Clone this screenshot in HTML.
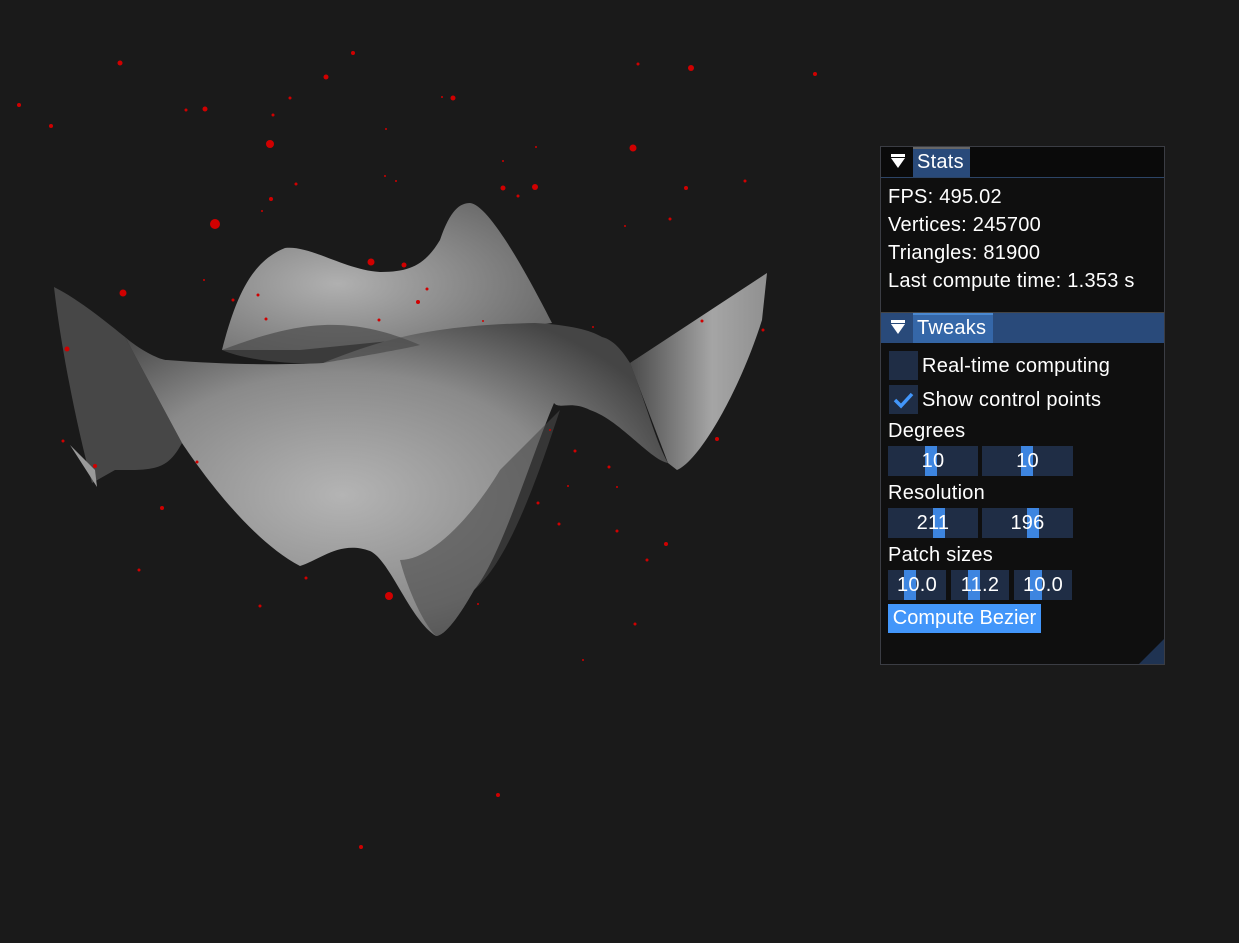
<!DOCTYPE html>
<html><head><meta charset="utf-8"><style>
html,body{margin:0;padding:0;width:1239px;height:943px;background:#1a1a1a;overflow:hidden;font-family:"Liberation Sans",sans-serif;}
svg{position:absolute;left:0;top:0}
.p{position:absolute;left:880px;top:146px;width:283px;height:517px;background:#0f0f0f;border:1px solid #3b3d44;box-sizing:content-box;color:#fff;font-size:20px;letter-spacing:0.25px}
.a{position:absolute}
.h{position:absolute;left:0;width:283px;height:30px}
.tri{position:absolute;left:10px;top:11px;width:0;height:0;border-left:7px solid transparent;border-right:7px solid transparent;border-top:10px solid #fff}
.tri:before{content:"";position:absolute;left:-7px;top:-14px;width:14px;height:3px;background:#fff}
.box{position:absolute;background:#1f2d45;height:30px;text-align:center;line-height:30px}
.g{position:absolute;top:0;width:12px;height:30px;background:#3d85e0}
.box span{position:relative}
</style></head><body>
<svg width="1239" height="943">
<defs>
<radialGradient id="gb" cx="0.35" cy="0.55" r="0.7"><stop offset="0" stop-color="#b0b0b0"/><stop offset="1" stop-color="#6a6a6a"/></radialGradient>
<radialGradient id="gf" cx="0.4" cy="0.55" r="0.65"><stop offset="0" stop-color="#b4b4b4"/><stop offset="0.6" stop-color="#8a8a8a"/><stop offset="1" stop-color="#454545"/></radialGradient>
<linearGradient id="gr" x1="0" y1="0" x2="1" y2="0"><stop offset="0" stop-color="#4a4a4a"/><stop offset="0.6" stop-color="#a5a5a5"/><stop offset="1" stop-color="#909090"/></linearGradient>
</defs>
<path d="M222,350 C235,300 250,262 285,248 C310,245 345,270 380,272 C410,272 425,265 440,240 C450,210 460,203 470,203 C490,205 530,280 552,323 L500,330 L300,350Z" fill="url(#gb)"/>
<path d="M630,363 L767,273 L762,320 C740,390 700,460 677,470 L668,463Z" fill="url(#gr)"/>
<path d="M54,287 C80,300 110,325 125,337 L182,443 C170,465 160,470 130,470 L115,470 L92,483 C75,420 60,340 54,287Z" fill="#474747"/>
<path d="M70,445 L95,470 L97,487Z" fill="#9a9a9a"/>
<path d="M125,337 C140,350 160,360 167,360 C230,365 280,365 323,363 C380,340 430,325 535,323 C570,325 590,330 602,337 C615,340 625,355 630,363 C645,400 655,440 668,463 C650,460 620,420 590,410 C570,400 560,410 554,403 C530,460 500,560 474,590 C460,615 445,636 436,636 C410,620 390,560 370,551 C340,540 320,560 300,566 C250,540 200,470 182,443Z" fill="url(#gf)"/>
<path d="M222,350 C300,320 350,315 420,345 C400,350 323,363 323,363 C280,365 240,358 222,350Z" fill="#4a4a4a" opacity="0.7"/>
<path d="M560,410 C540,470 510,560 474,590 C460,615 445,636 436,636 C420,620 405,580 400,560 C430,560 470,520 500,470Z" fill="#4a4a4a" opacity="0.6"/>
<g fill="#d00000">
<circle cx="120" cy="63" r="2.5"/><circle cx="19" cy="105" r="2"/><circle cx="51" cy="126" r="2"/><circle cx="186" cy="110" r="1.5"/><circle cx="205" cy="109" r="2.5"/><circle cx="270" cy="144" r="4"/><circle cx="290" cy="98" r="1.5"/><circle cx="326" cy="77" r="2.5"/><circle cx="353" cy="53" r="2"/><circle cx="453" cy="98" r="2.5"/><circle cx="442" cy="97" r="1"/><circle cx="386" cy="129" r="1"/><circle cx="273" cy="115" r="1.5"/><circle cx="296" cy="184" r="1.5"/><circle cx="385" cy="176" r="1"/><circle cx="396" cy="181" r="1"/><circle cx="503" cy="188" r="2.5"/><circle cx="535" cy="187" r="3"/><circle cx="518" cy="196" r="1.5"/><circle cx="633" cy="148" r="3.5"/><circle cx="638" cy="64" r="1.5"/><circle cx="691" cy="68" r="3"/><circle cx="815" cy="74" r="2"/><circle cx="536" cy="147" r="1"/><circle cx="686" cy="188" r="2"/><circle cx="745" cy="181" r="1.5"/><circle cx="670" cy="219" r="1.5"/><circle cx="625" cy="226" r="1"/><circle cx="503" cy="161" r="1"/><circle cx="262" cy="211" r="1"/><circle cx="271" cy="199" r="2"/><circle cx="215" cy="224" r="5"/><circle cx="371" cy="262" r="3.5"/><circle cx="404" cy="265" r="2.5"/><circle cx="123" cy="293" r="3.5"/><circle cx="204" cy="280" r="1"/><circle cx="258" cy="295" r="1.5"/><circle cx="233" cy="300" r="1.5"/><circle cx="67" cy="349" r="2.5"/><circle cx="427" cy="289" r="1.5"/><circle cx="418" cy="302" r="2"/><circle cx="379" cy="320" r="1.5"/><circle cx="266" cy="319" r="1.5"/><circle cx="702" cy="321" r="1.5"/><circle cx="593" cy="327" r="1"/><circle cx="763" cy="330" r="1.5"/><circle cx="717" cy="439" r="2"/><circle cx="63" cy="441" r="1.5"/><circle cx="95" cy="466" r="2"/><circle cx="197" cy="462" r="1.5"/><circle cx="575" cy="451" r="1.5"/><circle cx="609" cy="467" r="1.5"/><circle cx="617" cy="487" r="1"/><circle cx="568" cy="486" r="1"/><circle cx="538" cy="503" r="1.5"/><circle cx="162" cy="508" r="2"/><circle cx="559" cy="524" r="1.5"/><circle cx="617" cy="531" r="1.5"/><circle cx="666" cy="544" r="2"/><circle cx="647" cy="560" r="1.5"/><circle cx="139" cy="570" r="1.5"/><circle cx="306" cy="578" r="1.5"/><circle cx="389" cy="596" r="4"/><circle cx="478" cy="604" r="1"/><circle cx="260" cy="606" r="1.5"/><circle cx="635" cy="624" r="1.5"/><circle cx="583" cy="660" r="1"/><circle cx="498" cy="795" r="2"/><circle cx="361" cy="847" r="2"/><circle cx="550" cy="430" r="1"/><circle cx="483" cy="321" r="1"/>
</g>
</svg>
<div class="p">
<div class="h" style="top:0;background:#0a0a0a;border-bottom:1px solid #2c4466"><div class="tri"></div><div class="a" style="left:32px;top:0;width:57px;height:30px;background:#294a7a;border-top:2px solid #666;box-sizing:border-box;padding-left:4px;line-height:27px">Stats</div></div>
<div class="a" style="left:7px;top:36px;line-height:28px">FPS: 495.02<br>Vertices: 245700<br>Triangles: 81900<br>Last compute time: 1.353 s</div>
<div class="h" style="top:165px;background:#294a7a;border-top:1px solid #444"><div class="tri"></div><div class="a" style="left:32px;top:0;width:80px;height:30px;background:#3567a8;border-top:2px solid #4a88d0;box-sizing:border-box;padding-left:4px;line-height:27px">Tweaks</div></div>
<div class="a" style="left:8px;top:204px;width:29px;height:29px;background:#1f2d45"></div>
<div class="a" style="left:41px;top:206px;line-height:26px">Real-time computing</div>
<div class="a" style="left:8px;top:238px;width:29px;height:29px;background:#1f2d45"><svg width="29" height="29"><path d="M6,15 L12,21 L23,9" stroke="#4296fa" stroke-width="3.5" fill="none"/></svg></div>
<div class="a" style="left:41px;top:240px;line-height:26px">Show control points</div>
<div class="a" style="left:7px;top:271px;line-height:26px">Degrees</div>
<div class="box" style="left:7px;top:299px;width:90px"><div class="g" style="left:37px"></div><span>10</span></div>
<div class="box" style="left:101px;top:299px;width:91px"><div class="g" style="left:39px"></div><span>10</span></div>
<div class="a" style="left:7px;top:333px;line-height:26px">Resolution</div>
<div class="box" style="left:7px;top:361px;width:90px"><div class="g" style="left:45px"></div><span>211</span></div>
<div class="box" style="left:101px;top:361px;width:91px"><div class="g" style="left:45px"></div><span>196</span></div>
<div class="a" style="left:7px;top:395px;line-height:26px">Patch sizes</div>
<div class="box" style="left:7px;top:423px;width:58px"><div class="g" style="left:16px"></div><span>10.0</span></div>
<div class="box" style="left:70px;top:423px;width:58px"><div class="g" style="left:17px"></div><span>11.2</span></div>
<div class="box" style="left:133px;top:423px;width:58px"><div class="g" style="left:16px"></div><span>10.0</span></div>
<div class="a" style="left:7px;top:457px;width:153px;height:29px;background:#4296fa;text-align:center;line-height:29px;letter-spacing:0">Compute Bezier</div>
<div class="a" style="right:0;bottom:0;width:0;height:0;border-left:25px solid transparent;border-bottom:25px solid #1f3352"></div>
</div>
</body></html>
